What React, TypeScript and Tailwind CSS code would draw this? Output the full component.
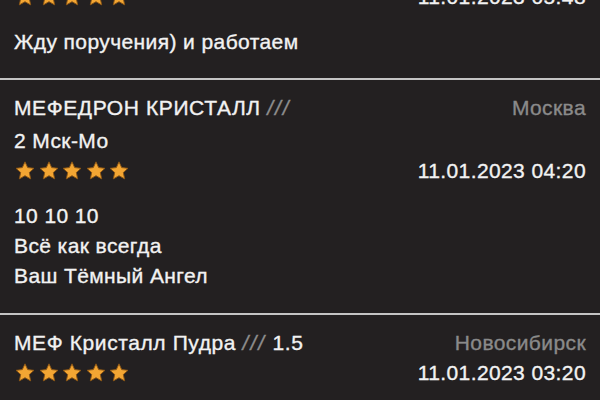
import React from 'react';

type Review = {
  title?: string;
  grade?: string;
  city?: string;
  sub?: string;
  date: string;
  lines: string[];
};

const reviews: Review[] = [
  { date: '11.01.2023 05:48', lines: ['Жду поручения) и работаем'] },
  {
    title: 'МЕФЕДРОН КРИСТАЛЛ',
    city: 'Москва',
    sub: '2 Мск-Мо',
    date: '11.01.2023 04:20',
    lines: ['10 10 10', 'Всё как всегда', 'Ваш Тёмный Ангел'],
  },
  { title: 'МЕФ Кристалл Пудра', grade: '1.5', city: 'Новосибирск', date: '11.01.2023 03:20', lines: [] },
];

function Star() {
  return (
    <svg viewBox="0 0 24 24" className="w-[22px] h-[22px]">
      <path
        d="M12 2l2.9 6.3 6.9.8-5.1 4.6 1.5 6.9L12 17.1l-6.2 3.5 1.5-6.9-5.1-4.6 6.9-.8z"
        fill="#f3a633"
        stroke="#8a5414"
        strokeWidth="1"
        strokeLinejoin="round"
      />
    </svg>
  );
}

function Stars() {
  return (
    <div className="flex gap-[1.5px]">
      {[0, 1, 2, 3, 4].map((i) => (
        <Star key={i} />
      ))}
    </div>
  );
}

function ReviewCard({ review, first }: { review: Review; first?: boolean }) {
  return (
    <div className={`px-[14px] ${first ? '-mt-[18px] pb-[21px]' : 'pt-[13px] pb-[22px]'}`}>
      {review.title && (
        <div className="flex justify-between h-[30px] items-center">
          <span className="tracking-[0.6px]">
            {review.title}{' '}
            <span className="text-[#8e8e8e] italic tracking-[2px]">///</span>
            {review.grade && <span> {review.grade}</span>}
          </span>
          <span className="text-[#8a8a8a]">{review.city}</span>
        </div>
      )}
      {review.sub && <div className="h-[30px] mt-[3px] flex items-center">{review.sub}</div>}
      <div className="flex justify-between items-center h-[30px]">
        <Stars />
        <span>{review.date}</span>
      </div>
      {review.lines.length > 0 && (
        <div className="mt-[15px] flex flex-col">
          {review.lines.map((line) => (
            <div key={line} className="h-[30px] flex items-center">
              {line}
            </div>
          ))}
        </div>
      )}
    </div>
  );
}

export default function App() {
  return (
    <div
      className="w-[600px] h-[400px] overflow-hidden bg-[#232021] text-[#f2f2f2] text-[21px] tracking-[0.4px] [-webkit-text-stroke:0.35px_currentColor]"
      style={{ fontFamily: '"Liberation Sans", Arial, sans-serif' }}
    >
      {reviews.map((r, i) => (
        <div key={i} className={i > 0 ? 'border-t-2 border-[#c4c4c4]' : ''}>
          <ReviewCard review={r} first={i === 0} />
        </div>
      ))}
    </div>
  );
}
